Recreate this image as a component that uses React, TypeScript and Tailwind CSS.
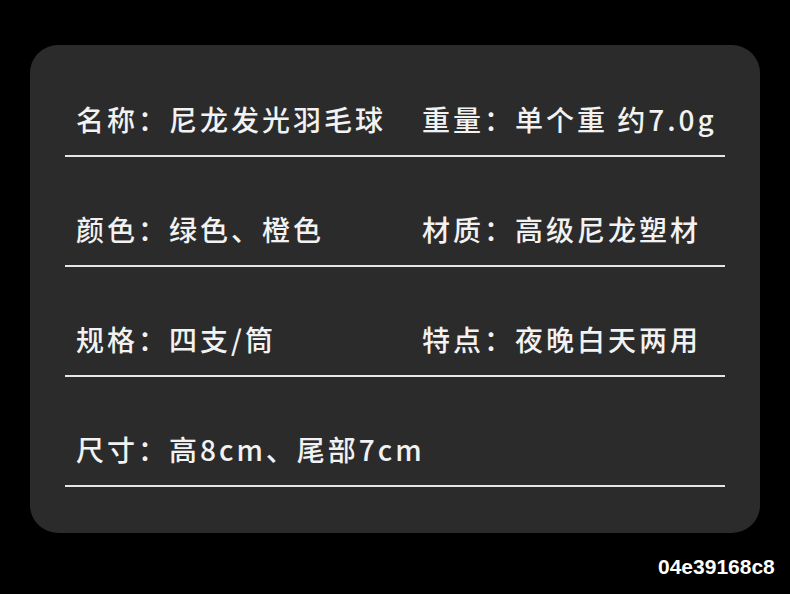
const rows: [string, string | null][] = [
  ["名称：尼龙发光羽毛球", "重量：单个重 约7.0g"],
  ["颜色：绿色、橙色", "材质：高级尼龙塑材"],
  ["规格：四支/筒", "特点：夜晚白天两用"],
  ["尺寸：高8cm、尾部7cm", null],
];

export default function App() {
  return (
    <div className="relative h-[594px] w-[790px] overflow-hidden bg-black pt-[45px] pl-[30px]">
      <div
        className="flex w-[730px] flex-col gap-[52px] rounded-[28px] bg-[#2b2b2c] px-[35px] pt-[54px] pb-[46px]"
        style={{ fontFamily: '"Noto Sans CJK SC", "Noto Sans", sans-serif' }}
      >
        {rows.map(([left, right]) => (
          <div
            key={left}
            className="flex h-[58px] items-start border-b-2 border-[#e6e6e6] pl-[11px] text-[28px] leading-[40px] font-medium tracking-[3px] whitespace-nowrap text-[#f2f2f2]"
          >
            <span className={right ? "w-[346px] shrink-0" : ""}>{left}</span>
            {right && <span>{right}</span>}
          </div>
        ))}
      </div>
      <span
        className="absolute top-[555px] left-[658px] text-[21px] leading-[24px] font-bold text-white"
        style={{ fontFamily: '"Liberation Sans", Arial, sans-serif' }}
      >
        04e39168c8
      </span>
    </div>
  );
}
